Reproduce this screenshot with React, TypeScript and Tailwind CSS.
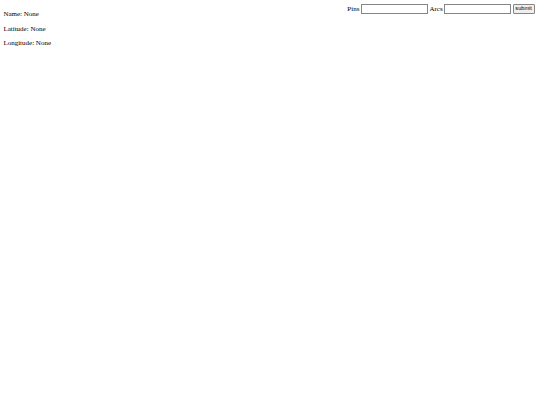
export default function App() {
  return (
    <div className="min-h-[405px] bg-white p-[3.4px] text-[7px] leading-[1.15] text-black [font-family:'Liberation_Serif',serif]">
      <form
        className="float-right mr-[2px] mt-[1px] flex items-center gap-[1.5px]"
        onSubmit={(e) => e.preventDefault()}
      >
        <label htmlFor="pins">Pins</label>
        <input
          id="pins"
          type="text"
          className="h-[9.5px] w-[67px] border border-[#858585] bg-white px-[1px]"
        />
        <label htmlFor="arcs">Arcs</label>
        <input
          id="arcs"
          type="text"
          className="h-[9.5px] w-[67px] border border-[#858585] bg-white px-[1px]"
        />
        <button
          type="submit"
          className="h-[9.5px] w-[22px] rounded-[1px] border border-[#858585] bg-[#efefef] text-[5.6px] leading-none [font-family:'Liberation_Sans',sans-serif]"
        >
          submit
        </button>
      </form>
      <p className="mt-[7px] mb-[6.5px]">Name: None</p>
      <p className="my-[6.5px]">Latitude: None</p>
      <p className="my-[6.5px]">Longitude: None</p>
    </div>
  );
}
